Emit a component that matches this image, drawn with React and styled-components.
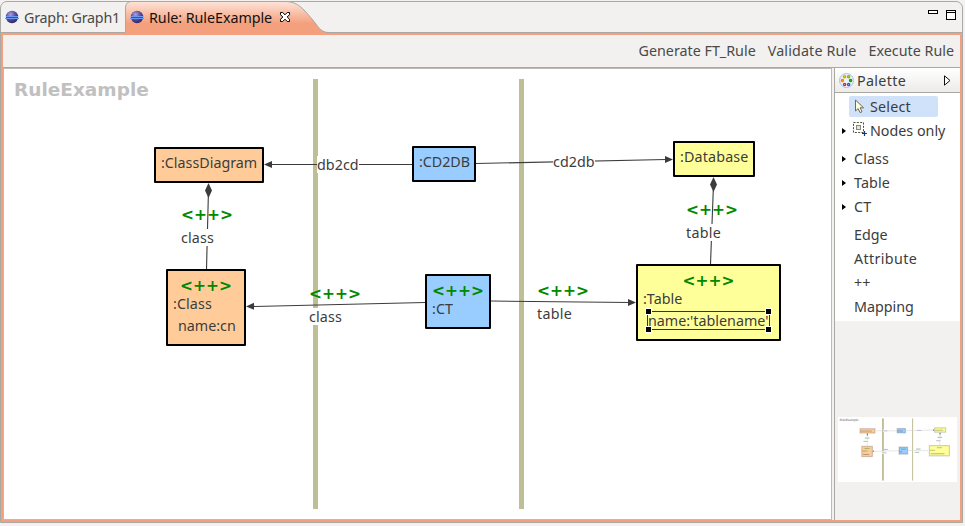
import React from 'react';
import styled, { createGlobalStyle } from 'styled-components';

const UI = '"Noto Sans", "Open Sans", sans-serif';
const MONO = '"DejaVu Sans", sans-serif';
const c = {
  chrome: '#f2f1ef', line: '#a9a8a3', accent: '#f4a080', text: '#3c3c3c',
  add: '#008800', lane: '#bfbf96', orange: '#ffcc99', blue: '#99ccff', yellow: '#ffff99',
};

const Global = createGlobalStyle`
  *, *::before, *::after { box-sizing: border-box; }
  body { margin: 0; background: ${c.chrome}; overflow: hidden; }
`;

const Page = styled.div`
  width: 965px;
  height: 526px;
  padding: 1px 2px 3px 0;
  background: #f3f2f1;
  font: 14.3px/20px ${UI};
  color: ${c.text};
`;
const Frame = styled.div`
  height: 522px;
  display: flex;
  flex-direction: column;
  border: 1px solid ${c.line};
  border-radius: 7px 7px 0 0;
  background: ${c.chrome};
`;
const TabBar = styled.div`
  flex: none;
  height: 31px;
  display: flex;
  border-bottom: 1px solid ${c.line};
`;
const Tab = styled.div`
  position: relative;
  display: flex;
  align-items: center;
  width: ${p => p.$w}px;
  height: 31px;
  padding-left: ${p => p.$pad}px;
  padding-top: 1px;
  gap: 5px;
  color: ${p => (p.$active ? '#111' : '#4a4a48')};
  > * { position: relative; }
`;
const TabShape = styled.svg`
  && { position: absolute; }
  left: 0;
  top: -1px;
`;
const TabIcon = styled.svg`
  margin-top: -2px;
`;
const Text = styled.span`
  letter-spacing: ${p => p.$ls || 0}px;
  white-space: nowrap;
`;
const CloseIcon = styled.svg`
  margin: -2px 0 0 2px;
`;
const WindowButtons = styled.div`
  margin-left: auto;
  display: flex;
  gap: 8px;
  padding: 8px 6px 0 0;
`;
const Minimize = styled.span`
  width: 10px;
  height: 4px;
  border: 1px solid #000;
  background: #fff;
`;
const Maximize = styled.span`
  width: 10px;
  height: 10px;
  border: 1px solid #000;
  background: linear-gradient(#fff 1px, #000 1px, #000 2px, #fff 2px);
`;
const Editor = styled.div`
  flex: 1;
  min-height: 0;
  display: flex;
  flex-direction: column;
  border: 2px solid ${c.accent};
`;
const Toolbar = styled.div`
  flex: none;
  height: 32px;
  display: flex;
  justify-content: flex-end;
  align-items: center;
  gap: 12px;
  padding-right: 6px;
  color: #4a4a48;
`;
const Body = styled.div`
  flex: 1;
  min-height: 0;
  display: flex;
  border-top: 1px solid ${c.line};
`;
const Canvas = styled.div`
  position: relative;
  width: 829px;
  border: 1px solid #bdbcb3;
  background: #fff;
`;
const Title = styled.div`
  position: absolute;
  left: 10px;
  top: 10px;
  font: bold 18.5px/22px ${MONO};
  color: #c0c0c0;
`;
const Lane = styled.div`
  position: absolute;
  left: ${p => p.$x}px;
  top: 10px;
  width: 5px;
  height: 430px;
  background: ${c.lane};
`;
const Edges = styled.svg`
  position: absolute;
  left: 0;
  top: 0;
`;
const Node = styled.div`
  position: absolute;
  left: ${p => p.$x}px;
  top: ${p => p.$y}px;
  width: ${p => p.$w}px;
  height: ${p => p.$h}px;
  border: 2px solid #000;
  border-radius: 1px;
  background: ${p => p.$bg};
  padding: 6px 5px 0;
  line-height: 16px;
`;
const Added = styled.div`
  font: bold 15.5px/18px ${MONO};
  color: ${c.add};
  text-align: center;
  margin-bottom: 1px;
`;
const NodeName = styled.div`
  letter-spacing: ${p => p.$ls || 0}px;
  white-space: nowrap;
`;
const Attribute = styled.div`
  position: relative;
  width: max-content;
  margin: 6px 0 0 5px;
  white-space: nowrap;
`;
const Selection = styled.div`
  position: absolute;
  left: -1px;
  top: -2px;
  width: 123px;
  height: 19px;
  border: 1px solid #333;
`;
const Handle = styled.span`
  position: absolute;
  width: 6px;
  height: 6px;
  background: #000;
  box-shadow: 0 0 0 1px #fff;
  ${p => p.$v}: -3px;
  ${p => p.$h}: -2px;
  width: 5px;
  height: 5px;
`;
const EdgeLabel = styled.div`
  position: absolute;
  left: ${p => p.$x}px;
  top: ${p => p.$y}px;
  background: #fff;
  line-height: 17px;
  letter-spacing: ${p => p.$ls || 0}px;
`;
const EdgeMark = styled(Added)`
  position: absolute;
  left: ${p => p.$x}px;
  top: ${p => p.$y}px;
`;
const Palette = styled.div`
  flex: 1;
  margin-left: 2px;
  display: flex;
  flex-direction: column;
  border-left: 1px solid ${c.line};
`;
const PaletteHeader = styled.div`
  flex: none;
  height: 25px;
  display: flex;
  align-items: center;
  gap: 3px;
  padding: 1px 9px 0 4px;
  border-bottom: 1px solid ${c.line};
  background: linear-gradient(#fff, #ecebea);
`;
const Expand = styled.svg`
  margin-left: auto;
`;
const PaletteList = styled.div`
  flex: none;
  height: 228px;
  padding-top: 2px;
  background: #fff;
`;
const Item = styled.div`
  display: flex;
  align-items: center;
  height: 24px;
  margin-top: ${p => (p.$gap ? 4 : 0)}px;
  padding-left: 19px;
`;
const Selected = styled.div`
  display: flex;
  align-items: center;
  gap: 5px;
  width: 89px;
  height: 21px;
  margin: -1px 0 0 -5px;
  padding-left: 5px;
  border-radius: 2px;
  background: #cfe2fa;
`;
const Marker = styled.svg`
  flex: none;
  margin: 0 8px 0 -12px;
`;
const NodesIcon = styled.svg`
  margin: -4px 2px 0 -2px;
`;
const Minimap = styled.svg`
  flex: none;
  display: block;
  margin: 96px 0 0 3px;
  background: #fff;
`;

const nodes = [
  { id: 'cd', x: 150, y: 78, w: 110, h: 36, bg: c.orange, name: ':ClassDiagram', ls: 0 },
  { id: 'cd2db', x: 408, y: 77, w: 64, h: 36, bg: c.blue, name: ':CD2DB', ls: -0.05 },
  { id: 'db', x: 669, y: 72, w: 82, h: 36, bg: c.yellow, name: ':Database', ls: 0.15 },
  { id: 'class', x: 162, y: 200, w: 80, h: 77, bg: c.orange, added: true, name: ':Class', ls: 0.1, attr: 'name:cn' },
  { id: 'ct', x: 421, y: 205, w: 66, h: 55, bg: c.blue, added: true, name: ':CT', ls: 0.1 },
  { id: 'table', x: 632, y: 195, w: 145, h: 77, bg: c.yellow, added: true, name: ':Table', ls: 0, attr: "name:'tablename'", selected: true },
];
const lines = [
  [408, 95.5, 266, 95.5], [472, 94.5, 662, 90.5], [204.5, 120, 202.5, 200],
  [709.5, 115, 706.5, 195], [421, 233.5, 248, 237.5], [487, 232, 626, 233.5],
];
const heads = [
  '260,95.5 268,92 268,99', '669,90.5 661,87 661,94',
  '242,237.5 250,233.8 250,240.8', '632,233.5 624,230 624,237',
  '204.5,114 208,121.5 204.5,129 201,121.5', '709.5,108 713,115.5 709.5,123 706,115.5',
];
const edgeLabels = [
  ['db2cd', 313, 87, 0.05], ['cd2db', 549, 84, 0.05], ['class', 177, 160, 0.15],
  ['table', 682, 155, 0.3], ['class', 305, 239, 0.15], ['table', 533, 236, 0.3],
];
const marks = [[177, 137], [682, 132], [305, 216], [533, 213]];

const EclipseIcon = () => (
  <TabIcon width="14" height="14" viewBox="0 0 14 14">
    <defs>
      <radialGradient id="ball" cx=".38" cy=".3" r=".75">
        <stop offset="0" stopColor="#a9a2dc" /><stop offset=".5" stopColor="#5a4fa0" /><stop offset="1" stopColor="#2b2260" />
      </radialGradient>
    </defs>
    <circle cx="7" cy="7" r="6.2" fill="url(#ball)" />
    <path d="M1 6.5h12M0 8.5h14" stroke="#6f97f0" />
    <path d="M1 7.5h12" stroke="#4a4794" />
  </TabIcon>
);

const PaletteIcon = () => (
  <svg width="15" height="15" viewBox="0 0 15 15">
    <circle cx="7.5" cy="7.5" r="7" fill="#eaf1fb" stroke="#a9c1e4" />
    <g fill="#fff" strokeWidth="1.3">
      <circle cx="5.6" cy="3.7" r="1.1" stroke="#d8a800" fill="#ffe23c" /><circle cx="9.6" cy="3.7" r="1.1" stroke="#86b800" fill="#d8f060" />
      <circle cx="3.4" cy="7.6" r="1.1" stroke="#f08a00" fill="#ffb030" /><circle cx="11.6" cy="7.6" r="1.1" stroke="#10981a" fill="#50d040" />
      <circle cx="5.6" cy="11.5" r="1.1" stroke="#dc2020" /><circle cx="9.6" cy="11.5" r="1.1" stroke="#2458b8" />
    </g>
  </svg>
);

const Arrow = () => <Marker width="4" height="6" viewBox="0 0 4 6"><path d="M0 0L4 3L0 6z" fill="#000" /></Marker>;

const Diagram = () => (
  <Canvas>
    <Title>RuleExample</Title>
    <Lane $x={309} />
    <Lane $x={515} />
    <Edges width="827" height="450">
      <g stroke={c.text} strokeWidth="1.1">
        {lines.map(([x1, y1, x2, y2]) => <line key={x1 + y1} x1={x1} y1={y1} x2={x2} y2={y2} />)}
      </g>
      <g fill={c.text}>{heads.map(h => <polygon key={h} points={h} />)}</g>
    </Edges>
    {edgeLabels.map(([t, x, y, ls]) => <EdgeLabel key={t + x} $x={x} $y={y} $ls={ls}>{t}</EdgeLabel>)}
    {marks.map(([x, y]) => <EdgeMark key={x} $x={x} $y={y}>&lt;++&gt;</EdgeMark>)}
    {nodes.map(n => (
      <Node key={n.id} $x={n.x} $y={n.y} $w={n.w} $h={n.h} $bg={n.bg}>
        {n.added && <Added>&lt;++&gt;</Added>}
        <NodeName $ls={n.ls}>{n.name}</NodeName>
        {n.attr && (
          <Attribute>
            {n.attr}
            {n.selected && (
              <Selection>
                <Handle $v="top" $h="left" /><Handle $v="top" $h="right" />
                <Handle $v="bottom" $h="left" /><Handle $v="bottom" $h="right" />
              </Selection>
            )}
          </Attribute>
        )}
      </Node>
    ))}
  </Canvas>
);

const Overview = () => (
  <Minimap width="119" height="65" viewBox="0 0 827 450" preserveAspectRatio="none">
    <text x="10" y="28" fontFamily="DejaVu Sans" fontWeight="bold" fontSize="22" textLength="134" fill="#a8a8a8">RuleExample</text>
    <g fill={c.lane}><rect x="306" y="10" width="13" height="430" /><rect x="515" y="10" width="7" height="430" /></g>
    <g stroke="#d4d4d4" strokeWidth="4">
      {lines.map(([x1, y1, x2, y2]) => <line key={x1 + y1} x1={x1} y1={y1} x2={x2} y2={y2} />)}
    </g>
    {edgeLabels.map(([t, x, y]) => (
      <g key={t + x}><rect x={x} y={y} width="36" height="17" fill="#fff" /><rect x={x} y={y + 5} width="32" height="8" fill="#c4c4d0" /></g>
    ))}
    {marks.map(([x, y]) => <rect key={x} x={x + 9} y={y + 5} width="32" height="8" fill="#a9cfa9" />)}
    {nodes.map(n => (
      <g key={n.id}>
        <rect x={n.x + 3} y={n.y + 3} width={n.w - 6} height={n.h - 6} fill={n.bg} stroke="#000" strokeOpacity=".18" strokeWidth="8" />
        {n.added && <rect x={n.x + n.w / 2 - 18} y={n.y + 14} width="36" height="7" fill={c.add} opacity=".35" />}
        <rect x={n.x + 7} y={n.y + (n.added ? 32 : 16)} width={n.name.length * 6} height="7" fill="#333" opacity=".3" />
        {n.attr && <rect x={n.x + 12} y={n.y + 56} width={n.attr.length * 6} height="7" fill="#333" opacity=".35" />}
      </g>
    ))}
    <g fill="#333" opacity=".7"><rect x="200" y="115" width="8" height="12" /><rect x="705" y="109" width="8" height="12" /><rect x="242" y="233" width="8" height="8" /><rect x="660" y="87" width="8" height="8" /></g>
  </Minimap>
);

export default function App() {
  return (
    <Page>
      <Global />
      <Frame>
        <TabBar>
          <Tab $w={124} $pad={4}>
            <EclipseIcon />
            <Text $ls={-0.24}>Graph: Graph1</Text>
          </Tab>
          <Tab $w={205} $pad={5} $active>
            <TabShape width="205" height="32" viewBox="0 0 205 32">
              <defs>
                <linearGradient id="tab" x2="0" y2="1">
                  <stop offset="0" stopColor="#fde4d9" /><stop offset=".7" stopColor="#f4a07c" /><stop offset="1" stopColor="#f4a080" />
                </linearGradient>
              </defs>
              <path d="M.5 32V6Q1 1 6 .5H161C170 1 174 4 180 10L187 18C193 25 195 31 203 31.5V32z" fill="url(#tab)" />
              <path d="M.5 31V6Q1 1 6 .5H161C170 1 174 4 180 10L187 18C193 25 195 31 203 31.5" fill="none" stroke="#a9a8a3" />
            </TabShape>
            <EclipseIcon />
            <Text $ls={-0.05}>Rule: RuleExample</Text>
            <CloseIcon width="12" height="12" viewBox="0 0 12 12">
              <path d="M1.5 1.5h2.2L6 3.8 8.3 1.5h2.2v2.2L8.2 6l2.3 2.3v2.2H8.3L6 8.2l-2.3 2.3H1.5V8.3L3.8 6 1.5 3.7z" fill="#fff" stroke="#000" />
            </CloseIcon>
          </Tab>
          <WindowButtons><Minimize /><Maximize /></WindowButtons>
        </TabBar>
        <Editor>
          <Toolbar>
            <Text>Generate FT_Rule</Text>
            <Text $ls={0.15}>Validate Rule</Text>
            <Text>Execute Rule</Text>
          </Toolbar>
          <Body>
            <Diagram />
            <Palette>
              <PaletteHeader>
                <PaletteIcon />
                <Text $ls={0.33}>Palette</Text>
                <Expand width="7" height="11" viewBox="0 0 7 11"><path d="M.5 .8L6 5.5.5 10.2z" fill="#fff" stroke="#111" /></Expand>
              </PaletteHeader>
              <PaletteList>
                <Item>
                  <Selected>
                    <svg width="11" height="15" viewBox="0 0 11 15">
                      <path d="M1.5 1v11l2.6-2.4 1.9 4 2-.9-1.9-3.9h3.5z" fill="#fffbe0" stroke="#6e6a55" />
                    </svg>
                    <Text $ls={0.2}>Select</Text>
                  </Selected>
                </Item>
                <Item>
                  <Arrow />
                  <NodesIcon width="16" height="16" viewBox="0 0 16 16" fill="none">
                    <rect x="1.5" y="1.5" width="10" height="10" stroke="#4c4c38" strokeDasharray="2 1.33" />
                    <rect x="4.5" y="4.5" width="4" height="4" fill="#e4e4dc" stroke="#8a8a78" />
                    <path d="M12.5 10v5M10 12.5h5" stroke="#17377a" strokeWidth="1.2" />
                  </NodesIcon>
                  <Text>Nodes only</Text>
                </Item>
                <Item $gap><Arrow /><Text $ls={0.1}>Class</Text></Item>
                <Item><Arrow /><Text $ls={0.1}>Table</Text></Item>
                <Item><Arrow /><Text $ls={0.2}>CT</Text></Item>
                <Item $gap><Text>Edge</Text></Item>
                <Item><Text $ls={0.35}>Attribute</Text></Item>
                <Item><Text>++</Text></Item>
                <Item><Text>Mapping</Text></Item>
              </PaletteList>
              <Overview />
            </Palette>
          </Body>
        </Editor>
      </Frame>
    </Page>
  );
}
